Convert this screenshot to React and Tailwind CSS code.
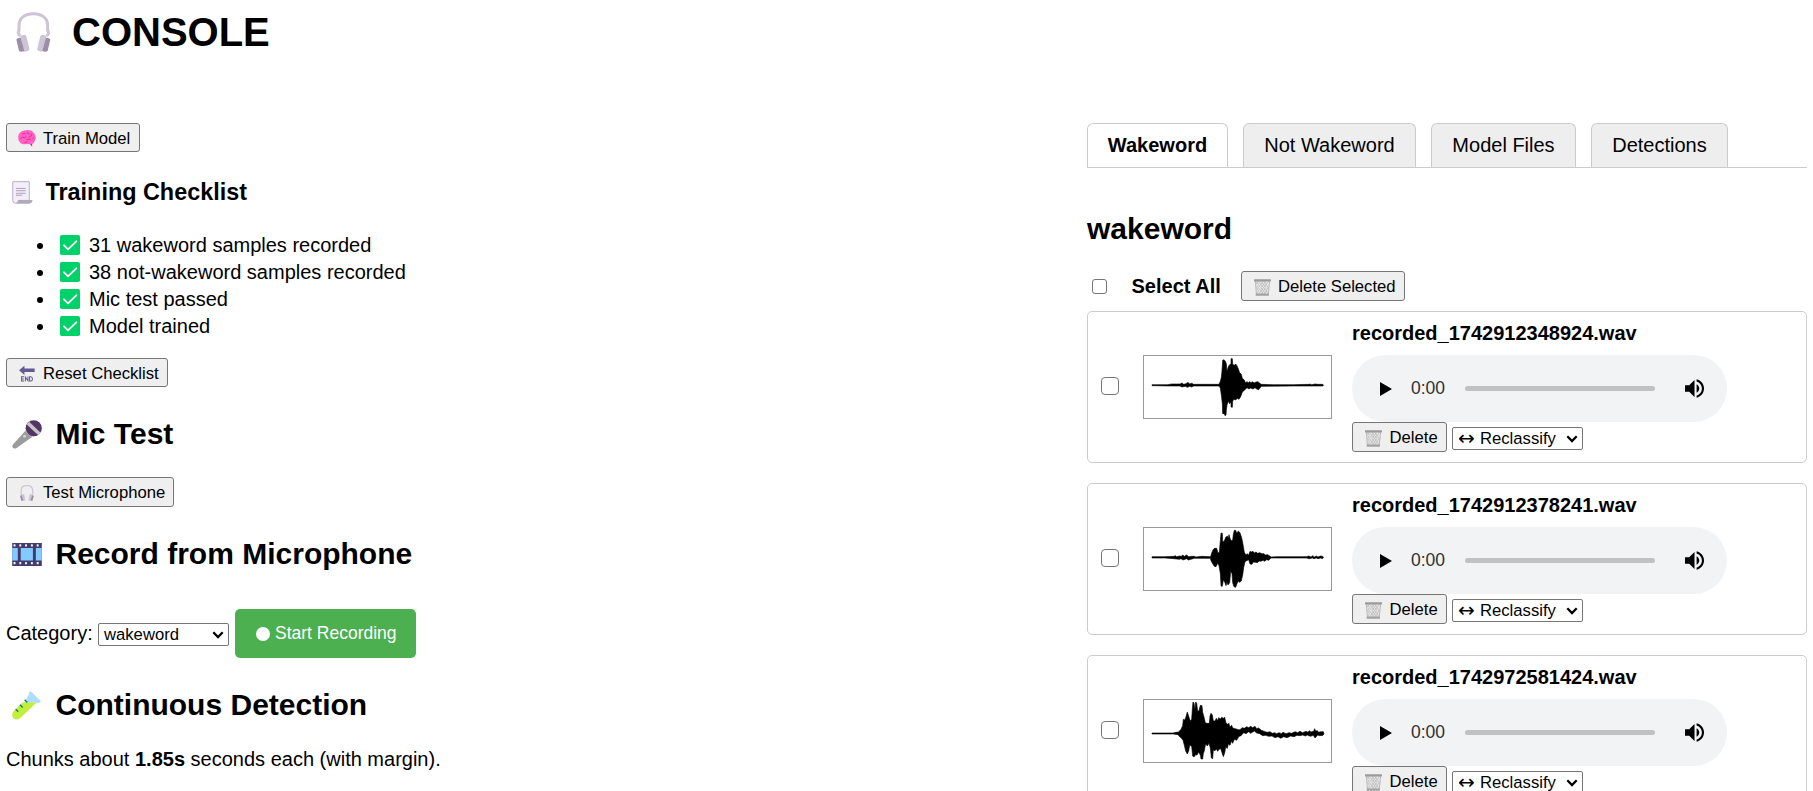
import React from "react";

const BUTTON =
  "flex items-center rounded-[3px] border border-[#767676] bg-[#efefef] pt-[2px] text-[16.67px] leading-[22px] text-black whitespace-nowrap";

function Headphones({ className }) {
  return (
    <svg viewBox="50 36 104 121" className={className} preserveAspectRatio="none">
      <path d="M63 108 Q53 100 59 92 V77 C59 53 78 41 101.500 41 C125 41 144 53 144 77 V92 Q151 100 141 108" fill="none" stroke="#cdc4d6" strokeWidth="9" strokeLinejoin="round" />
      <path d="M62 108 L75 105 Q80 105 81 110 L90 148 Q90 153 85 154 L75 156Z" fill="#cdc4d6" />
      <path d="M141 108 L128 105 Q123 105 122 110 L113 148 Q113 153 118 154 L128 156Z" fill="#cdc4d6" />
      <path d="M51 119 Q56 112 64 114 L75 154 Q66 158 59 154Z" fill="#9b8fa6" />
      <path d="M152 119 Q147 112 139 114 L128 154 Q137 158 144 154Z" fill="#9b8fa6" />
    </svg>
  );
}

function Brain({ className }) {
  return (
    <svg viewBox="53 389 56 52" className={className}>
      <path d="M88 428 L97 426 L97 441 L91 434Z" fill="#ff0d96" />
      <path d="M54 414 C52 403 60 393 70 391 C79 387 94 388 101 396 C108 402 110 414 106 421 C104 430 96 434 88 432 L70 433 C64 433 60 430 59 426 C56 424 54 419 54 414Z" fill="#ff63c1" />
      <path d="M59 416 L67 411 L72 412 M66 402 L72 398 L77 401 M82 394 V398 L89 401 M96 400 L94 407 L86 411 M78 407 L73 415 M80 419 L90 416 L94 420 M98 415 L103 413 M73 427 L82 426" fill="none" stroke="#f6149b" strokeWidth="2.500" />
    </svg>
  );
}

function Scroll({ className }) {
  return (
    <svg viewBox="35 539 64 71" className={className}>
      <path d="M37 541 H88 V599 H55 Q53 608 47 608 Q37 608 37 600Z" fill="#f3eef8" stroke="#b9aec4" strokeWidth="3" />
      <path d="M54 598 H98 Q97 609 87 609 H47 Q53 606 54 598Z" fill="#b4a8bf" />
      <path d="M47 562 H77 M47 569 H77 M47 577 H77 M47 583 H66" stroke="#9c8fab" strokeWidth="2.500" />
    </svg>
  );
}

function CheckBadge() {
  return (
    <svg viewBox="0 0 60 60" className="mr-[9px] h-5 w-5">
      <rect width="60" height="60" rx="5" fill="#00d26a" />
      <path d="M12 31 L24 43 L49 19" fill="none" stroke="#fff" strokeWidth="5.500" strokeLinecap="round" strokeLinejoin="round" />
    </svg>
  );
}

function EndArrow({ className }) {
  return (
    <svg viewBox="56 434 50 51" className={className}>
      <path d="M56 449 L73 435 V444 H105 V455 H73 V464Z" fill="#635994" />
      <path d="M72 470 H64 V483 H72 M64 476.500 H71 M76 484 V471 L84 482 V469 M89 470 H93 Q98 470 98 476.500 Q98 483 93 483 H89Z" fill="none" stroke="#635994" strokeWidth="3.200" />
    </svg>
  );
}

function Mic({ className }) {
  return (
    <svg viewBox="35 58 91 88" className={className}>
      <path d="M77 89 L97 109 L49 143 Q43 147 38 142 Q34 138 38 132Z" fill="#9b9b9b" />
      <circle cx="73" cy="107" r="4" fill="#d8d8d8" />
      <circle cx="101" cy="83" r="24.500" fill="#533566" />
      <path d="M79 72 L87 63 L122 97 L115 104Z" fill="#c4c4c4" />
      <path d="M77 83 Q77 77 79 72 L111 105 Q104 107 98 107Z" fill="#533566" />
      <path d="M77 89 Q83 104 97 108 L93 111 L74 92Z" fill="#b5b5b5" />
    </svg>
  );
}

const HOLES = [42, 59.5, 77, 95, 112.500];

function Film({ className }) {
  return (
    <svg viewBox="35 426 90 70" className={className}>
      <rect x="35" y="426" width="90" height="70" fill="#433b6b" />
      <path d="M35 441 H52 V479 H35Z M61 441 H98 V479 H61Z M107 441 H125 V479 H107Z" fill="#83cbff" />
      {HOLES.map((x) => (
        <React.Fragment key={x}>
          <rect x={x - 3} y="430" width="6" height="7" rx="1" fill="#f5f2fa" />
          <rect x={x - 3} y="484" width="6" height="7" rx="1" fill="#f5f2fa" />
        </React.Fragment>
      ))}
    </svg>
  );
}

function TestTube({ className }) {
  return (
    <svg viewBox="38 299 87 86" className={className}>
      <path d="M89 303 L94 299 L125 329 L120 334 L111 334 L76 334 L83 319 Q90 311 89 303Z" fill="#aeddff" />
      <path d="M69 333 H112 L62 380 Q52 388 42 380 Q35 371 42 360Z" fill="#c3ef3c" />
      <path d="M76 325 L84 333 M62 340 L70 348 M49 353 L57 361" stroke="#008463" strokeWidth="4" />
    </svg>
  );
}

function Trash({ className }) {
  return (
    <svg viewBox="521 506 50 50" className={className}>
      <path d="M524 512 H568 L564 551 H528Z" fill="#e9e9e9" />
      <path d="M527 512 L534 522 L529 531 L534 540 L530 550 M534 512 L541 522 L534 531 L541 541 L535 550 M548 512 L541 522 L549 531 L541 541 L548 550 M541 512 L549 522 L541 531 L549 541 L542 550 M555 512 L549 522 L556 531 L549 541 L555 550 M549 512 L557 522 L549 531 L557 541 L550 550 M564 512 L557 522 L562 531 L557 541 L562 550 M534 512 L527 522" fill="none" stroke="#b5b5b5" strokeWidth="2.200" />
      <path d="M525 512 L528 550 M567 512 L563 550" stroke="#b0b0b0" strokeWidth="2.500" />
      <rect x="521" y="507" width="50" height="6" rx="1.500" fill="#9b9b9b" />
      <rect x="526" y="549" width="39" height="6" rx="1.500" fill="#a3a3a3" />
    </svg>
  );
}

function Dropdown({ children }) {
  return (
    <div className="flex h-[23px] w-[131px] items-center justify-between rounded-[2px] border border-[#767676] bg-white pl-[5px] pr-[4px] text-[16.67px] leading-[21px] text-black">
      <span className="flex">{children}</span>
      <svg viewBox="0 0 12 8" className="h-2 w-3">
        <path d="M1.300 1.300 L6 6 L10.700 1.300" fill="none" stroke="#000" strokeWidth="2.300" />
      </svg>
    </div>
  );
}

const WAVES = [
  {
    top: 165,
    d: "M216 254 L262 254 L275 252 L300 252 L306 249 L311 253 L318 251 L324 247 L329 252 L335 250 L341 253 L400 253 L417 253 L421 244 L424 232 L426 212 L428 181 L432 179 L436 184 L439 191 L441 214 L443 207 L446 198 L450 193 L453 192 L453 176 L457 176 L458 193 L463 196 L467 192 L471 197 L475 207 L479 218 L484 223 L487 235 L493 240 L496 248 L501 245 L505 248 L509 245 L513 248 L518 245 L522 249 L528 246 L533 245 L538 248 L543 253 L580 254 L640 254 L688 253 L690 252 L695 254 L705 252 L715 253 L728 253 L731 256 L728 258 L640 258 L545 259 L540 264 L536 269 L530 267 L525 263 L519 267 L512 264 L507 267 L501 263 L496 268 L492 272 L487 276 L482 290 L477 298 L472 295 L467 300 L462 298 L458 303 L457 322 L453 321 L453 306 L449 311 L445 304 L441 315 L439 330 L438 345 L435 347 L433 341 L428 341 L427 311 L424 285 L421 264 L417 258 L341 258 L335 261 L329 259 L322 262 L316 259 L306 261 L300 258 L270 258 L216 257Z",
  },
  {
    top: 141,
    d: "M216 230 L255 230 L282 229 L286 227 L290 230 L298 228 L304 229 L308 225 L313 229 L320 225 L326 230 L335 229 L343 229 L347 231 L365 229 L392 230 L395 219 L399 210 L403 205 L410 205 L414 219 L418 217 L421 182 L423 159 L427 160 L428 185 L433 183 L437 172 L442 168 L445 175 L447 164 L449 172 L453 182 L458 181 L460 163 L463 151 L467 151 L470 160 L475 153 L480 158 L485 173 L489 193 L493 217 L498 225 L502 221 L506 226 L510 214 L514 216 L519 214 L523 219 L528 216 L533 220 L539 218 L546 221 L552 221 L556 225 L563 224 L568 227 L573 231 L590 230 L680 230 L686 228 L693 231 L698 227 L703 231 L709 228 L714 231 L721 228 L727 229 L731 232 L727 236 L722 234 L714 236 L709 234 L702 236 L697 234 L688 236 L680 234 L573 234 L566 241 L560 239 L554 244 L549 241 L543 244 L537 243 L532 248 L526 247 L520 246 L516 253 L510 252 L506 239 L500 242 L495 245 L491 263 L488 285 L484 303 L479 307 L475 304 L471 311 L467 322 L462 320 L458 308 L456 281 L452 274 L449 308 L444 315 L441 307 L438 317 L434 306 L430 300 L427 319 L423 318 L421 281 L417 257 L413 250 L408 260 L403 259 L398 251 L393 242 L391 235 L343 235 L325 240 L320 236 L309 240 L303 236 L298 238 L282 236 L255 234 L216 234Z",
  },
  {
    top: 147,
    d: "M216 249 L278 249 L289 247 L296 246 L303 238 L308 227 L310 208 L314 210 L317 203 L322 186 L327 202 L331 213 L335 208 L337 178 L339 156 L342 159 L345 180 L347 156 L350 159 L353 184 L357 182 L361 166 L366 167 L368 187 L372 201 L376 219 L382 220 L388 220 L390 198 L393 190 L397 195 L400 213 L405 213 L409 205 L413 212 L416 203 L421 207 L425 202 L430 205 L434 202 L438 219 L443 223 L447 220 L449 231 L455 226 L458 234 L466 236 L475 239 L480 239 L487 233 L493 235 L500 230 L506 233 L512 229 L518 233 L525 229 L530 236 L536 234 L544 241 L555 245 L562 247 L570 245 L577 250 L584 248 L589 251 L597 248 L604 251 L609 247 L618 251 L627 248 L635 250 L645 245 L653 248 L660 244 L668 248 L678 244 L684 247 L688 242 L693 246 L701 244 L704 236 L707 243 L712 242 L716 247 L723 245 L730 245 L732 251 L729 256 L719 257 L713 255 L705 264 L700 256 L691 259 L682 255 L676 258 L668 255 L660 257 L651 256 L642 260 L632 258 L621 263 L611 260 L602 265 L594 260 L585 263 L576 258 L566 259 L556 256 L548 257 L539 251 L530 249 L523 243 L512 250 L506 245 L498 251 L491 248 L482 258 L477 259 L470 271 L463 268 L458 280 L454 274 L450 286 L445 282 L442 295 L437 292 L434 309 L430 320 L426 308 L422 296 L417 298 L413 304 L409 297 L404 303 L400 299 L398 326 L394 324 L391 294 L387 280 L382 288 L377 281 L373 302 L370 311 L368 327 L363 327 L361 315 L356 306 L351 315 L347 314 L342 321 L338 318 L335 289 L329 286 L326 303 L322 312 L317 303 L313 286 L309 271 L304 264 L299 260 L294 254 L280 252 L216 252Z",
  },
];

function Waveform({ wave }) {
  return (
    <div className="ml-6 h-[64px] w-[189px] border border-[#999] bg-white">
      <svg viewBox={`192 ${wave.top + 3} 561 186`} className="h-[62px] w-[187px]">
        <path d={wave.d} fill="#000" stroke="#000" strokeWidth="1.800" />
      </svg>
    </div>
  );
}

function Player() {
  return (
    <div className="flex h-[67px] w-[375px] items-center rounded-full bg-[#f1f3f4]">
      <svg viewBox="0 0 12 14" className="ml-7 h-3.5 w-3">
        <path d="M0 0 V14 L12 7Z" fill="#000" />
      </svg>
      <span className="mb-[2px] ml-[19px] w-[54px] text-[17.5px] leading-5 text-[#303030]">0:00</span>
      <div className="h-[5px] w-[190px] rounded-full bg-[#c1c1c2]" />
      <svg viewBox="3 3.230 18 17.540" className="ml-[30px] h-[19px] w-[19px]">
        <path d="M3 9v6h4l5 5V4L7 9H3zm13.500 3c0-1.770-1.020-3.290-2.500-4.030v8.050c1.480-.73 2.500-2.250 2.500-4.020zM14 3.230v2.060c2.890.86 5 3.540 5 6.710s-2.110 5.850-5 6.710v2.060c4.010-.91 7-4.490 7-8.770s-2.990-7.860-7-8.770z" />
      </svg>
    </div>
  );
}

function RecordingCard({ name, wave }) {
  return (
    <article className="mb-5 flex h-[152px] rounded-[5px] border border-[#ccc] pl-[13px]">
      <input type="checkbox" className="mt-[65px] h-[18px] w-[18px] appearance-none rounded-[4px] border-[1.5px] border-[#767676] bg-white" />
      <div className="pt-[43px]">
        <Waveform wave={wave} />
      </div>
      <div className="ml-5 pt-[10px]">
        <div className="mb-[11px] text-[20px] leading-[22px] font-bold">{name}</div>
        <Player />
        <div className="flex items-center">
          <button className={`${BUTTON} h-[30px] w-[95px] pl-[12px]`}>
            <Trash className="mr-[7.500px] h-[17px] w-[17px]" />
            Delete
          </button>
          <div className="ml-[5px] mt-[3px]">
            <Dropdown>
              <span className="mr-[5px] w-[17px] font-['DejaVu_Sans'] text-[20px]">↔</span>
              Reclassify
            </Dropdown>
          </div>
        </div>
      </div>
    </article>
  );
}

const TABS = [
  { label: "Wakeword", style: "w-[141px] bg-white font-bold" },
  { label: "Not Wakeword", style: "w-[173px] bg-[#eee]" },
  { label: "Model Files", style: "w-[145px] bg-[#eee]" },
  { label: "Detections", style: "w-[137px] bg-[#eee]" },
];

const CHECKLIST = [
  "31 wakeword samples recorded",
  "38 not-wakeword samples recorded",
  "Mic test passed",
  "Model trained",
];

const RECORDINGS = [
  "recorded_1742912348924.wav",
  "recorded_1742912378241.wav",
  "recorded_1742972581424.wav",
];

function SectionTitle({ icon, children }) {
  return (
    <h2 className="flex h-[34px] items-center text-[30px] leading-[34px] font-bold">
      <span className="flex w-[49.5px] pl-[6px]">{icon}</span>
      {children}
    </h2>
  );
}

export default function App() {
  return (
    <div className="h-screen overflow-hidden bg-white px-[6px] font-['Liberation_Sans',Arial,sans-serif] text-[20px] text-black">
      <h1 className="flex h-[64px] items-center text-[40px] leading-[44px] font-bold">
        <Headphones className="ml-[10px] mr-[21px] h-[40px] w-[35px]" />
        CONSOLE
      </h1>

      <div className="flex justify-between pt-[59px]">
        <main className="flex w-[600px] flex-col items-start">
          <button className={`${BUTTON} h-[29px] w-[134px] pl-[11px]`}>
            <Brain className="mr-[7px] h-[17px] w-[18px]" />
            Train Model
          </button>

          <h3 className="mt-[26px] flex h-[28px] items-center text-[23.4px] leading-[28px] font-bold">
            <Scroll className="ml-[6px] mr-[12.5px] h-[23px] w-[21px]" />
            Training Checklist
          </h3>

          <ul className="mt-[25px]">
            {CHECKLIST.map((item) => (
              <li key={item} className="flex h-[27px] items-center">
                <span className="ml-[31px] mr-[17px] mt-[2px] h-[6px] w-[6px] rounded-full bg-black" />
                <CheckBadge />
                {item}
              </li>
            ))}
          </ul>

          <button className={`${BUTTON} mt-[19px] h-[29px] w-[162px] pl-[12px]`}>
            <EndArrow className="mr-[8px] h-[17px] w-[16px]" />
            Reset Checklist
          </button>

          <div className="mt-[30px]">
            <SectionTitle icon={<Mic className="h-[29px] w-[30px]" />}>Mic Test</SectionTitle>
          </div>

          <button className={`${BUTTON} mt-[26px] h-[30px] w-[168px] pl-[13px]`}>
            <Headphones className="mr-[9px] h-[16px] w-[14px]" />
            Test Microphone
          </button>

          <div className="mt-[30px]">
            <SectionTitle icon={<Film className="h-[23px] w-[30px]" />}>Record from Microphone</SectionTitle>
          </div>

          <div className="mt-[38px] flex h-[49px] items-center">
            <span className="mb-[2px] w-[92px]">Category:</span>
            <div className="mt-[2px]">
              <Dropdown>wakeword</Dropdown>
            </div>
            <button className="ml-[6px] flex h-[49px] w-[181px] items-center rounded-[5px] bg-[#4caf50] pl-[21px] text-[17.5px] text-white">
              <span className="mr-[5px] h-[14px] w-[14px] rounded-full bg-white" />
              Start Recording
            </button>
          </div>

          <div className="mt-[30px]">
            <SectionTitle icon={<TestTube className="h-[29px] w-[29px]" />}>Continuous Detection</SectionTitle>
          </div>

          <p className="mt-[26px] leading-[22px]">
            Chunks about <b>1.85s</b> seconds each (with margin).
          </p>
        </main>

        <aside className="flex w-[720px] flex-col">
          <nav className="flex h-[45px] gap-[15px] border-b border-[#ccc]">
            {TABS.map((tab) => (
              <div
                key={tab.label}
                className={`${tab.style} flex h-[44px] items-center justify-center rounded-t-[6px] border border-b-0 border-[#ccc] pb-[2px]`}
              >
                {tab.label}
              </div>
            ))}
          </nav>

          <h2 className="mt-[44px] text-[30px] leading-[34px] font-bold">wakeword</h2>

          <div className="mt-[25px] flex h-[30px] items-center">
            <input type="checkbox" className="ml-[5px] h-[15px] w-[15px] appearance-none rounded-[3px] border border-[#767676] bg-white" />
            <span className="ml-[24.5px] w-[109.5px] font-bold">Select All</span>
            <button className={`${BUTTON} h-[30px] w-[164px] pl-[12px]`}>
              <Trash className="mr-[7px] h-[17px] w-[17px]" />
              Delete Selected
            </button>
          </div>

          <section className="mt-[10px]">
            {RECORDINGS.map((name, i) => (
              <RecordingCard key={name} name={name} wave={WAVES[i]} />
            ))}
          </section>
        </aside>
      </div>
    </div>
  );
}
